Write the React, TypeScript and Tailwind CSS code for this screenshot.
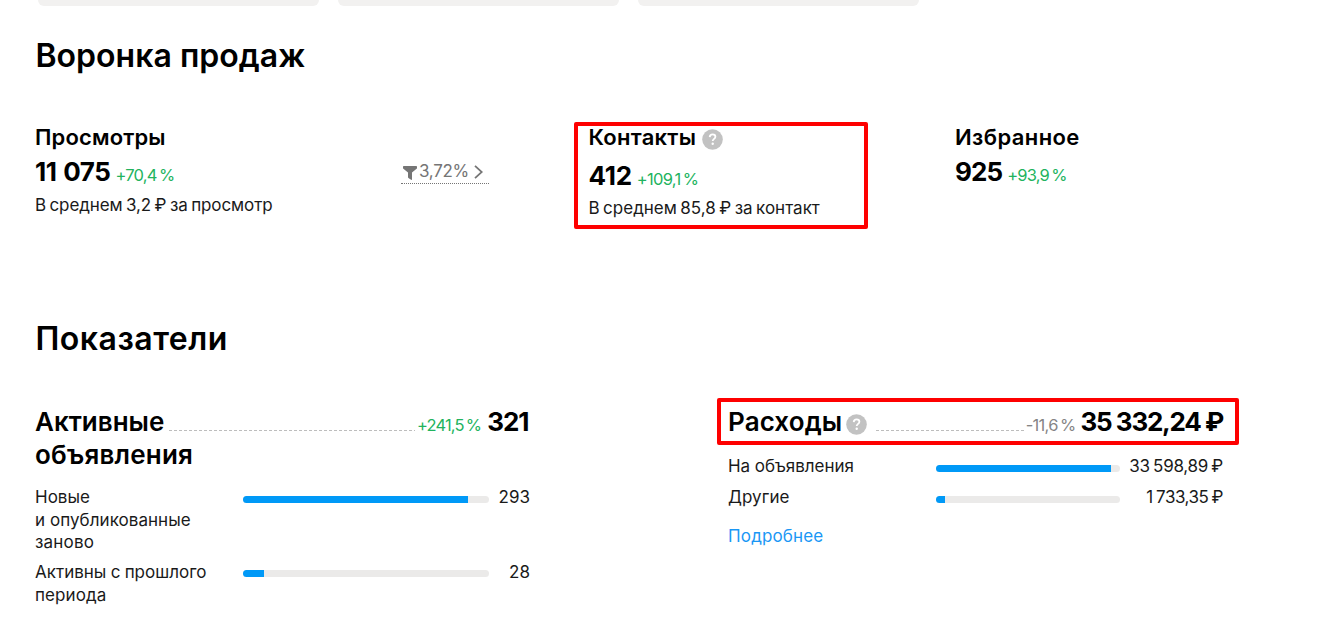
import type { ReactNode } from 'react';

function Help({ className = '' }: { className?: string }) {
  return (
    <svg className={`shrink-0 ${className}`} width="21" height="21" viewBox="0 0 21 21">
      <circle cx="10.5" cy="10.5" r="10.3" fill="#c2c2c2" />
      <path d="M7.7 8.1c.1-1.8 1.2-2.7 2.9-2.7s2.8 1 2.8 2.4c0 2.1-2.7 2.1-2.7 4.3" fill="none" stroke="#fff" strokeWidth="1.8" />
      <circle cx="10.7" cy="14.8" r="1.2" fill="#fff" />
    </svg>
  );
}

function Funnel() {
  return (
    <svg className="shrink-0" width="14" height="14" viewBox="0 0 14 14" fill="#757575">
      <path d="M.7 0h12.6c.4 0 .7.3.7.7v1.2c0 .4-.1.6-.4.9L9 6.6v6.7c0 .6-.5.8-.9.4l-2.7-1.800c-.3-.2-.4-.4-.4-.8V6.600L.4 2.800C.1 2.500 0 2.300 0 1.900V.7C0 .3.3 0 .7 0Z" />
    </svg>
  );
}

function Bar({ value, className = '' }: { value: number; className?: string }) {
  return (
    <div className={`h-[7px] shrink-0 overflow-hidden rounded-full bg-[#ebeae9] ${className}`}>
      <div className="h-full bg-[#0099f7]" style={{ width: `${value}%` }} />
    </div>
  );
}

function Leader({ className = '' }: { className?: string }) {
  return (
    <div
      className={`h-px flex-1 bg-[repeating-linear-gradient(90deg,#bdbdbd_0_3px,transparent_3px_5px)] ${className}`}
    />
  );
}

const h1 = 'text-[32px] leading-10 font-[620]';
const h3 = 'text-[22px] leading-7 font-semibold';
const num = 'text-[26px] leading-8 font-[650]';
const title = 'text-[26px] leading-[33px] font-[620]';
const body = 'text-[17px] leading-[22.5px]';
const percent = 'text-[16.5px] leading-[22px]';
const green = `${percent} text-[#22b35e]`;

interface RowProps {
  label: ReactNode;
  value: number;
  amount: string;
  barClass: string;
  amountClass?: string;
  className: string;
}

function Row({ label, value, amount, barClass, amountClass = '', className }: RowProps) {
  return (
    <div className={`flex items-start ${body} text-[#1a1a1a] ${className}`}>
      <div className="w-[208px] shrink-0">{label}</div>
      <Bar value={value} className={barClass} />
      <div className={`flex-1 text-right ${amountClass}`}>{amount}</div>
    </div>
  );
}

export default function App() {
  return (
    <div className="h-[644px] w-[1340px] overflow-hidden bg-white font-['Inter',sans-serif] whitespace-nowrap text-black">
      <div className="flex h-[6px] gap-[19px] pl-[38px]">
        <div className="flex h-full w-[281px] items-end rounded-b-2xl bg-[#f2f1f0]" />
        <div className="flex h-full w-[281px] items-end rounded-b-2xl bg-[#f2f1f0]" />
        <div className="flex h-full w-[281px] items-end rounded-b-2xl bg-[#f2f1f0]" />
      </div>

      <section className="mt-[30px] h-[283px] pl-[35px]">
        <h1 className={`${h1} pl-[0.5px] tracking-[0.02px]`}>Воронка продаж</h1>
        <div className="mt-[47px] flex items-start">
          <div className="w-[366px]">
            <h3 className={`${h3} tracking-[0.15px]`}>Просмотры</h3>
            <div className="mt-[5px] flex items-baseline gap-[5px]">
              <span className={`${num} tracking-[-0.45px] [word-spacing:1px]`}>11 075</span>
              <span className={`${green} tracking-[-0.75px]`}>+70,4&#8201;%</span>
            </div>
            <div className={`${body} mt-[6px] tracking-[-0.1px] text-[#1a1a1a] [word-spacing:-1.2px]`}>
              В среднем 3,2 ₽ за просмотр
            </div>
          </div>

          <div className="w-[187.5px] pt-[37px]">
            <div className="flex h-6 w-[88px] items-start border-b border-dotted border-[#757575] pl-[2px] text-[#757575]">
              <div className="pt-[6px]">
                <Funnel />
              </div>
              <span className="ml-[2px] text-[17px] leading-[22px] tracking-[-0.3px]">3,72%</span>
              <svg className="mt-[5px] ml-[5px]" width="9" height="14" viewBox="0 0 9 14" fill="none" stroke="#757575" strokeWidth="1.8">
                <path d="M1 0.8 7.8 7 1 13.2" />
              </svg>
            </div>
          </div>

          <div className="relative w-[366.5px]">
            <div className="absolute -top-px -left-[14.5px] h-[107px] w-[294px] rounded-[2px] border-4 border-[#fe0000]" />
            <h3 className={`${h3} flex h-7 items-start tracking-[0.25px]`}>
              Контакты
              <Help className="mt-[6px] ml-[5.5px]" />
            </h3>
            <div className="mt-[9px] flex items-baseline gap-[5px]">
              <span className={`${num} tracking-[-0.3px]`}>412</span>
              <span className={`${green} tracking-[-0.7px]`}>+109,1&#8201;%</span>
            </div>
            <div className={`${body} mt-[5px] text-[#1a1a1a] [word-spacing:-1.3px]`}>В среднем 85,8 ₽ за контакт</div>
          </div>

          <div>
            <h3 className={`${h3} tracking-[0.4px]`}>Избранное</h3>
            <div className="mt-[5px] flex items-baseline gap-[5px]">
              <span className={`${num} tracking-[-0.9px]`}>925</span>
              <span className={`${green} tracking-[-0.8px]`}>+93,9&#8201;%</span>
            </div>
          </div>
        </div>
      </section>

      <section className="pl-[35px]">
        <h1 className={`${h1} pl-[0.5px] tracking-[0.5px]`}>Показатели</h1>
        <div className="mt-[46px] flex items-start">
          <div className="w-[495px]">
            <div className="flex h-[66px] items-start">
              <h2 className={`${title} w-[134px] tracking-[0.2px]`}>
                <span className="tracking-[0px]">Активные</span>
                <br />
                объявления
              </h2>
              <Leader className="mt-[25px]" />
              <div className="mr-[1.5px] ml-[2px] flex items-baseline gap-[6px]">
                <span className={`${green} tracking-[-0.85px]`}>+241,5&#8201;%</span>
                <span className={`${num} leading-[33px] tracking-[-1px]`}>321</span>
              </div>
            </div>
            <Row
              className="mt-[15px]"
              label={
                <>
                  Новые
                  <br />
                  <span className="tracking-[0.05px]">и опубликованные</span>
                  <br />
                  <span className="tracking-[0.2px]">заново</span>
                </>
              }
              value={91.6}
              barClass="mt-[10px] w-[246px]"
              amount="293"
            />
            <Row
              className="mt-[7.5px]"
              label={
                <>
                  <span className="[word-spacing:-0.5px]">Активны с прошлого</span>
                  <br />
                  <span className="tracking-[0.1px]">периода</span>
                </>
              }
              value={8.7}
              barClass="mt-[9px] w-[246px]"
              amount="28"
            />
          </div>

          <div className="relative ml-[198px] w-[496px]">
            <div className="absolute -top-[7px] -left-[11px] h-[47px] w-[522px] rounded-[2px] border-4 border-[#fe0000]" />
            <div className="flex items-start">
              <h2 className={`${title} tracking-[0.1px]`}>Расходы</h2>
              <Help className="mt-[9px] ml-1" />
              <Leader className="mt-[25px] ml-[9px]" />
              <div className="mr-[1px] ml-[2px] flex items-baseline gap-[5px]">
                <span className={`${percent} tracking-[-0.7px] text-[#858585]`}>-11,6&#8201;%</span>
                <span className={`${num} leading-[33px] tracking-[-1.25px] [word-spacing:-0.5px]`}>35 332,24 ₽</span>
              </div>
            </div>
            <Row
              className="mt-[17px]"
              label={<span className="tracking-[-0.05px]">На объявления</span>}
              value={95.1}
              barClass="mt-[10px] w-[184px]"
              amount="33 598,89 ₽"
              amountClass="pr-px tracking-[-0.3px] [word-spacing:-1px]"
            />
            <Row
              className="mt-[8.5px]"
              label={<span className="tracking-[0.05px]">Другие</span>}
              value={5}
              barClass="mt-[9.5px] w-[184px]"
              amount="1 733,35 ₽"
              amountClass="pr-px tracking-[-0.5px] [word-spacing:-1px]"
            />
            <a className={`${body} mt-4 block tracking-[0.15px] text-[#1a97f5]`}>Подробнее</a>
          </div>
        </div>
      </section>
    </div>
  );
}
